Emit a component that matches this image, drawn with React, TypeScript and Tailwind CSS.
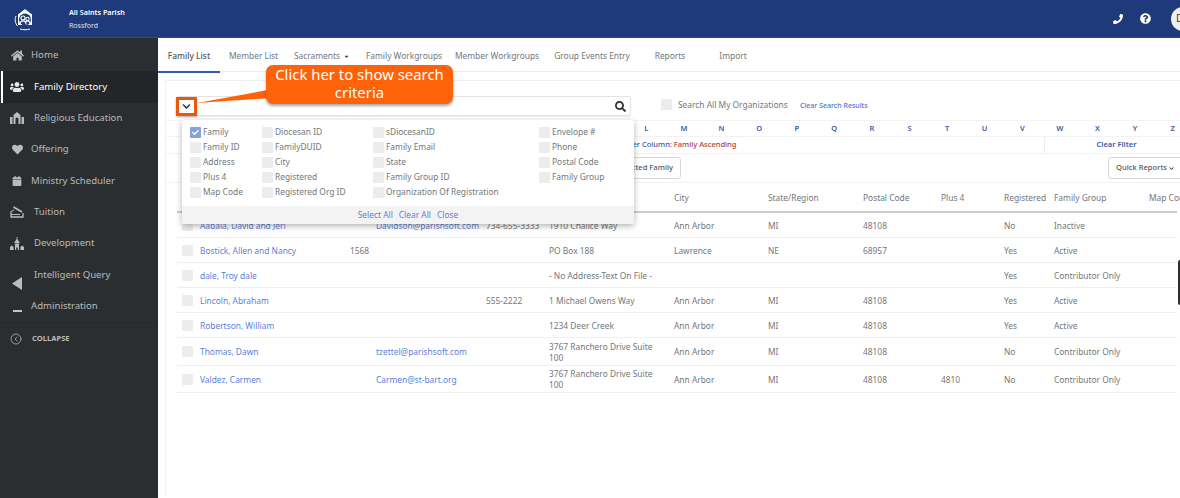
import React from 'react';
import { CircleChevronLeft } from 'lucide-react';
import { FaHome, FaUsers, FaHeart, FaCalendar, FaPhoneAlt, FaQuestionCircle, FaSearch, FaChevronDown, FaCheck, FaCaretDown } from 'react-icons/fa';

function SchoolIcon() {
  return (
    <svg width="14" height="12" viewBox="0 0 14 12" fill="currentColor">
      <path d="M7 0l3.500 3v9H8.500V7a1.500 1.500 0 0 0-3 0v5H3.500V3z" />
      <path d="M0 5h2.500v7H0zM11.500 5H14v7h-2.500z" />
    </svg>
  );
}

function TuitionIcon() {
  return (
    <svg width="14" height="12" viewBox="0 0 14 12" fill="none" stroke="currentColor">
      <path d="M1 5.500V11h12V7" strokeWidth="1.300" />
      <path d="M1 5.500l3-1.500M1 8.500h9" strokeWidth="1" />
      <path d="M3.500 1l8.500 5" strokeWidth="1.800" />
    </svg>
  );
}

function DevelopmentIcon() {
  return (
    <svg width="14" height="13" viewBox="0 0 14 13" fill="currentColor">
      <path d="M6.500 0h1v1.500h-1zM7 1.500L10 6H4z" />
      <path d="M5 6.500h4V13H7.800v-2.500H6.200V13H5z" />
      <path d="M0 10l1.800-1.500L3.600 10v3H0zM10.400 10l1.800-1.500L14 10v3h-3.600z" />
    </svg>
  );
}

const navItems = [
  { label: 'Home', icon: <FaHome size={13} />, textClass: 'ml-[7px]' },
  { label: 'Family Directory', icon: <FaUsers size={14} />, textClass: 'ml-[10px] text-white', active: true },
  { label: 'Religious Education', icon: <SchoolIcon />, textClass: 'ml-[10px]' },
  { label: 'Offering', icon: <FaHeart size={11} />, textClass: 'ml-[7px]' },
  { label: 'Ministry Scheduler', icon: <FaCalendar size={10} />, textClass: 'ml-[7px]' },
  { label: 'Tuition', icon: <TuitionIcon />, textClass: 'ml-[10px]' },
  { label: 'Development', icon: <DevelopmentIcon />, textClass: 'ml-[10px]' },
  {
    label: 'Intelligent Query',
    icon: (
      <svg width="11" height="13" viewBox="0 0 11 13" fill="currentColor" className="translate-y-[9px]">
        <path d="M0 6.500L10 0v13z" />
      </svg>
    ),
    textClass: 'ml-[10px]',
  },
  { label: 'Administration', icon: <span className="block w-[9px] h-[2px] bg-[#c4c4c4] translate-y-[5px]" />, textClass: 'ml-[7px]' },
];

const tabs = [
  { label: 'Family List', w: 'w-[62px]', active: true },
  { label: 'Member List', w: 'w-[67px]' },
  { label: 'Sacraments', w: 'w-[70px]', caret: true },
  { label: 'Family Workgroups', w: 'w-[94px]' },
  { label: 'Member Workgroups', w: 'w-[92px]' },
  { label: 'Group Events Entry', w: 'w-[98px]' },
  { label: 'Reports', w: 'w-[58px]' },
  { label: 'Import', w: 'w-[68px]' },
];

const letters = 'ABCDEFGHIJKLMNOPQRSTUVWXYZ'.split('');

const popupCols = [
  { w: 'w-[72px]', items: ['Family', 'Family ID', 'Address', 'Plus 4', 'Map Code'] },
  { w: 'w-[111px]', items: ['Diocesan ID', 'FamilyDUID', 'City', 'Registered', 'Registered Org ID'] },
  { w: 'w-[166px]', items: ['sDiocesanID', 'Family Email', 'State', 'Family Group ID', 'Organization Of Registration'] },
  { w: 'w-[90px]', items: ['Envelope #', 'Phone', 'Postal Code', 'Family Group'] },
];

const headers = ['Family', 'ID', 'Email', 'Phone', 'Address', 'City', 'State/Region', 'Postal Code', 'Plus 4', 'Registered', 'Family Group', 'Map Code'];

const rows = [
  { h: 'h-[25px]', family: 'Aabala, David and Jeri', id: '', email: 'Davidson@parishsoft.com', phone: '734-655-3333', address: '1910 Chalice Way', city: 'Ann Arbor', state: 'MI', postal: '48108', plus: '', reg: 'No', group: 'Inactive' },
  { h: 'h-[25px]', family: 'Bostick, Allen and Nancy', id: '1568', email: '', phone: '', address: 'PO Box 188', city: 'Lawrence', state: 'NE', postal: '68957', plus: '', reg: 'Yes', group: 'Active' },
  { h: 'h-[25px]', family: 'dale, Troy dale', id: '', email: '', phone: '', address: '- No Address-Text On File -', city: '', state: '', postal: '', plus: '', reg: 'Yes', group: 'Contributor Only' },
  { h: 'h-[25px]', family: 'Lincoln, Abraham', id: '', email: '', phone: '555-2222', address: '1 Michael Owens Way', city: 'Ann Arbor', state: 'MI', postal: '48108', plus: '', reg: 'Yes', group: 'Active' },
  { h: 'h-[25px]', family: 'Robertson, William', id: '', email: '', phone: '', address: '1234 Deer Creek', city: 'Ann Arbor', state: 'MI', postal: '48108', plus: '', reg: 'Yes', group: 'Active' },
  { h: 'h-[28px]', family: 'Thomas, Dawn', id: '', email: 'tzettel@parishsoft.com', phone: '', address: '3767 Ranchero Drive Suite 100', city: 'Ann Arbor', state: 'MI', postal: '48108', plus: '', reg: 'No', group: 'Contributor Only' },
  { h: 'h-[27px]', family: 'Valdez, Carmen', id: '', email: 'Carmen@st-bart.org', phone: '', address: '3767 Ranchero Drive Suite 100', city: 'Ann Arbor', state: 'MI', postal: '48108', plus: '4810', reg: 'No', group: 'Contributor Only' },
];

const gridCols = 'grid grid-cols-[23px_150px_26px_110px_63px_125px_94px_95px_78px_63px_50px_95px_60px]';

function Logo() {
  return (
    <svg width="24" height="24" viewBox="0 0 24 24" fill="none" stroke="white">
      <path d="M5 7.500L12 2l7 5.500V18H5z" fill="white" stroke="none" />
      <circle cx="12" cy="12.500" r="6" fill="#1f3a7a" stroke="none" />
      <circle cx="10" cy="11" r="2" strokeWidth="1.100" />
      <circle cx="14.500" cy="12" r="1.700" strokeWidth="1.100" />
      <path d="M6.800 17.500c.4-2.400 1.600-3.600 3.200-3.600s2.800 1.200 3.200 3.600M12.800 15c.5-.7 1-1 1.800-1 1.300 0 2.200 1 2.500 2.800" strokeWidth="1.100" />
      <path d="M3 9c-1.400 3.300-1 7 1.500 10M7 22c3 1 7 1 10 0" strokeWidth="1" />
    </svg>
  );
}

function Box({ checked }: { checked?: boolean }) {
  return (
    <span className={`flex items-center justify-center w-[11px] h-[11px] shrink-0 rounded-[1px] ${checked ? 'bg-[#86a0e0]' : 'bg-[#ececec]'}`}>
      {checked && <FaCheck size={7} className="text-white" />}
    </span>
  );
}

export default function App() {
  return (
    <div className="w-[1180px] h-[498px] overflow-hidden flex flex-col bg-white font-['Inter',sans-serif] text-[8.4px] text-[#74777a]">
      <header className="h-[38px] shrink-0 bg-[#1f3a7a] border-b border-[#2a4a8c] flex items-center">
        <div className="w-[69px] pl-[13px]"><Logo /></div>
        <div className="flex-1 text-white">
          <div className="font-semibold text-[7.2px] leading-[10px] mb-[4px]">All Saints Parish</div>
          <div className="text-[7px] leading-[9px] text-[#dbe2f0]">Rossford</div>
        </div>
        <FaPhoneAlt size={10} className="text-white mr-[17px] -scale-x-100" />
        <FaQuestionCircle size={11} className="text-white mr-[20px]" />
        <div className="w-[24px] h-[24px] mr-[-15px] rounded-full bg-[#efefef] text-[#333] text-[10px] flex items-center pl-[5px]">D</div>
      </header>

      <div className="flex flex-1 min-h-0">
        <aside className="w-[158px] shrink-0 bg-[#2b2e30] text-[#b9bbbc] text-[9.6px]">
          <div className="pt-[2px]">
            {navItems.map((item) => (
              <div key={item.label} className={`h-[31.3px] flex items-center ${item.active ? 'bg-[#232628] ml-[1px] border-l-2 border-white pl-[7px]' : 'pl-[10px]'}`}>
                <span className={`w-[14px] flex justify-center ${item.active ? 'text-[#e6e6e6]' : ''}`}>{item.icon}</span>
                <span className={item.textClass}>{item.label}</span>
              </div>
            ))}
          </div>
          <div className="border-t border-[#26292b] h-[34px] flex items-center pl-[10px]">
            <CircleChevronLeft size={12} strokeWidth={1.5} />
            <span className="ml-[10px] text-[7.6px] font-bold">COLLAPSE</span>
          </div>
        </aside>

        <main className="relative flex-1 min-w-0">
          <nav className="h-[34px] flex border-b border-[#ececec] pt-[4px]">
            {tabs.map((t) => (
              <div key={t.label} className={`${t.w} shrink-0 flex items-center justify-center whitespace-nowrap ${t.active ? 'border-b-2 border-[#2f5bb0] text-[#53565a] font-medium h-[31px]' : ''}`}>
                {t.label}
                {t.caret && <FaCaretDown size={7} className="ml-[3px] text-[#444]" />}
              </div>
            ))}
          </nav>

          <section className="mt-[8px] ml-[7px] h-[416px] border-t border-l border-[#f1f1f1]">
            <div className="h-[39px] pl-[11px] pt-[15px] flex items-start">
              <div className="w-[454px] h-[20px] border border-[#e4e4e4] rounded-[2px] flex items-center justify-end pr-[4px] shadow-[0_1px_1px_rgba(0,0,0,0.06)]">
                <FaSearch size={11} className="text-[#2b2e30]" />
              </div>
              <div className="ml-[30px] mt-[3px]"><Box /></div>
              <span className="ml-[6px] w-[122px] mt-[3px] leading-[11px] whitespace-nowrap">Search All My Organizations</span>
              <span className="mt-[4px] text-[7px] leading-[11px] font-medium text-[#4a75d6] whitespace-nowrap">Clear Search Results</span>
            </div>

            <div className="h-[17px] border-y border-[#f3f3f3] flex items-center overflow-hidden pl-[48px] text-[#3f5a9c] text-[7.5px] font-semibold">
              {letters.map((l) => (
                <span key={l} className="w-[37.6px] shrink-0 text-center">{l}</span>
              ))}
            </div>

            <div className="h-[17px] border-b border-[#f3f3f3] flex items-center text-[7.5px] font-medium">
              <span className="ml-[430px] w-[430px] shrink-0 whitespace-nowrap">
                <span className="text-[#3f5a9c]">Sorted Filter Column: </span>
                <span className="text-[#a94442]">Family Ascending</span>
              </span>
              <span className="ml-[18px] w-[144px] h-full shrink-0 border-l border-[#ececec] flex items-center justify-center text-[#3f5a9c] font-semibold">Clear Filter</span>
            </div>

            <div className="h-[29px] border-b border-[#f3f3f3] flex items-center justify-between pl-[10px] text-[7.6px] font-medium text-[#55585c]">
              <div className="w-[505px] h-[22px] flex justify-end">
                <span className="h-full w-[120px] border border-[#d6d6d6] rounded-[3px] flex items-center justify-end pr-[7px] whitespace-nowrap">Print Selected Family</span>
              </div>
              <div className="w-[80px] h-[22px] mr-[-8px] shrink-0 border border-[#d6d6d6] rounded-[3px] flex items-center pl-[7px] whitespace-nowrap">
                Quick Reports
                <FaChevronDown size={5} className="ml-[2px] text-[#333]" />
              </div>
            </div>

            <div className={`${gridCols} h-[28px] pt-[2px] items-center pl-[11px] whitespace-nowrap`}>
              <span />
              {headers.map((h) => <span key={h}>{h}</span>)}
            </div>

            <div className="ml-[11px] border-t-2 border-[#c9cbce] w-[1000px]">
              {rows.map((r) => (
                <div key={r.family} className={`${gridCols} ${r.h} items-center border-b border-[#efefef] leading-[11px]`}>
                  <span className="pl-[5px]"><Box /></span>
                  <span className="text-[#5b7fd6]">{r.family}</span>
                  <span className="whitespace-nowrap">{r.id}</span>
                  <span className="text-[#5b7fd6] whitespace-nowrap">{r.email}</span>
                  <span className="whitespace-nowrap">{r.phone}</span>
                  <span className="w-[112px]">{r.address}</span>
                  <span>{r.city}</span>
                  <span>{r.state}</span>
                  <span>{r.postal}</span>
                  <span>{r.plus}</span>
                  <span>{r.reg}</span>
                  <span className="whitespace-nowrap">{r.group}</span>
                  <span />
                </div>
              ))}
            </div>
          </section>

          {/* search field dropdown */}
          <div className="absolute left-[24px] top-[82px] w-[452px] h-[104px] bg-white rounded-[2px] shadow-[0_2px_6px_rgba(0,0,0,0.3)] flex flex-col z-10">
            <div className="flex-1 flex pt-[5px] pl-[8px]">
              {popupCols.map((col) => (
                <div key={col.w} className={`${col.w} shrink-0`}>
                  {col.items.map((item) => (
                    <div key={item} className="h-[15px] flex items-center gap-[2px] whitespace-nowrap">
                      <Box checked={item === 'Family'} />
                      <span>{item}</span>
                    </div>
                  ))}
                </div>
              ))}
            </div>
            <div className="h-[18px] bg-[#f3f3f3] flex items-center justify-center gap-[6px] text-[#5b7fd6]">
              <span>Select All</span>
              <span>Clear All</span>
              <span>Close</span>
            </div>
          </div>

          {/* annotation callout */}
          <svg className="absolute left-[30px] top-[50px] z-20" width="100" height="20" viewBox="0 0 100 20">
            <path d="M9 15L85 1v9z" fill="#ff6309" />
          </svg>
          <div className="absolute left-[18px] top-[59px] w-[21px] h-[19px] border-[3px] border-[#e8590c] flex items-center justify-center z-20 shadow-[0_1px_2px_rgba(0,0,0,0.3)]">
            <FaChevronDown size={9} className="text-[#2b2e30]" />
          </div>
          <div className="absolute left-[108px] top-[27px] w-[187px] h-[39px] pb-[3px] rounded-[7px] bg-[#ff6309] text-white text-[14.900px] leading-[18px] font-['Liberation_Sans',sans-serif] text-center flex items-center justify-center z-20 shadow-[0_2px_3px_rgba(0,0,0,0.35)]">
            <span>Click her to show search<br />criteria</span>
          </div>

          {/* side tab on the right edge */}
          <div className="absolute right-0 top-[222px] w-[2px] h-[45px] rounded-l-[2px] bg-[#2b2e30]" />
        </main>
      </div>
    </div>
  );
}
